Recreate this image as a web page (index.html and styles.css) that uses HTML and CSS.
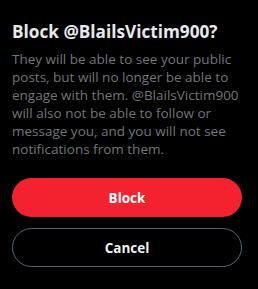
FILE: index.html
```html
<!DOCTYPE html>
<html>
<head>
<meta charset="utf-8">
<link rel="stylesheet" href="styles.css">
</head>
<body>
<div class="dialog">
  <h1 class="title">Block @BlailsVictim900?</h1>
  <p class="desc">They will be able to see your public posts, but will no longer be able to engage with them. @BlailsVictim900 will also not be able to follow or message you, and you will not see notifications from them.</p>
  <div class="actions">
    <button class="btn btn-danger">Block</button>
    <button class="btn btn-outline">Cancel</button>
  </div>
</div>
</body>
</html>
```
FILE: styles.css
```css
html, body {
  margin: 0;
  padding: 0;
  background: #000;
}
body {
  font-family: "Open Sans", "Noto Sans", sans-serif;
  width: 258px;
  height: 289px;
  overflow: hidden;
}
.dialog {
  padding: 20px 16px 0 12px;
  display: flex;
  flex-direction: column;
}
.title {
  margin: 0;
  font-size: 17.2px;
  line-height: 24px;
  font-weight: 700;
  color: #e7e9ea;
}
.desc {
  margin: 6px 0 0;
  font-size: 13.5px;
  line-height: 18px;
  color: #71767b;
}
.actions {
  margin-top: 20px;
  display: flex;
  flex-direction: column;
  gap: 11px;
}
.btn {
  height: 39px;
  border-radius: 20px;
  font-family: inherit;
  font-size: 13.5px;
  font-weight: 700;
  cursor: pointer;
}
.btn-danger {
  background: #f4212e;
  color: #fff;
  border: none;
}
.btn-outline {
  background: transparent;
  color: #eff3f4;
  border: 1px solid #536471;
}
```
